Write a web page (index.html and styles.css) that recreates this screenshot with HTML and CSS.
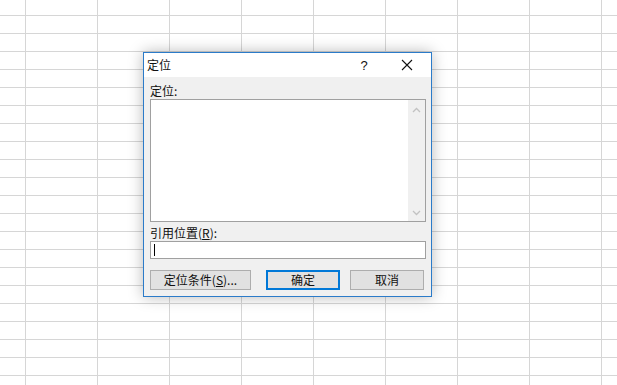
FILE: index.html
```html
<!DOCTYPE html>
<html lang="zh-CN">
  <head>
    <meta charset="UTF-8" />
    <meta name="viewport" content="width=device-width, initial-scale=1.0" />
    <title>定位</title>
    <link rel="stylesheet" href="styles.css">
  </head>
  <body>
    <div class="sheet"></div>

    <div class="dialog">
      <div class="title-bar">
        <span class="title">定位</span>
        <span class="help">?</span>
        <span class="close">
          <svg width="12" height="12" viewBox="0 0 12 12">
            <path d="M1 1 L11 11 M11 1 L1 11" stroke="#111" stroke-width="1.1" fill="none" />
          </svg>
        </span>
      </div>
      <div class="dialog-body">
        <div class="label">定位:</div>
        <div class="listbox">
          <div class="scrollbar">
            <svg width="9" height="6" viewBox="0 0 9 6">
              <path d="M1 5 L4.5 1.5 L8 5" stroke="#c2c2c2" stroke-width="1.3" fill="none" />
            </svg>
            <svg width="9" height="6" viewBox="0 0 9 6">
              <path d="M1 1 L4.5 4.5 L8 1" stroke="#c2c2c2" stroke-width="1.3" fill="none" />
            </svg>
          </div>
        </div>
        <div class="label label-ref">引用位置(<u>R</u>):</div>
        <div class="text-input"><span class="caret"></span></div>
        <div class="buttons">
          <button class="btn btn-special">定位条件(<u>S</u>)...</button>
          <button class="btn btn-default">确定</button>
          <button class="btn">取消</button>
        </div>
      </div>
    </div>
  </body>
</html>
```

FILE: styles.css
```css
body {
  margin: 0;
  width: 617px;
  height: 385px;
  overflow: hidden;
  font-family: "Noto Sans CJK SC", "Microsoft YaHei", sans-serif;
  font-size: 12px;
  color: #111;
  background-color: #ffffff;
}

.sheet {
  width: 617px;
  height: 385px;
  background-image:
    linear-gradient(to right, #d6d6d6 1px, transparent 1px),
    linear-gradient(to bottom, #d6d6d6 1px, transparent 1px);
  background-size: 72px 18px;
  background-position: 25px 15px;
}

.dialog {
  position: absolute;
  left: 143px;
  top: 52px;
  width: 287px;
  height: 243px;
  border: 1px solid #2b7bc9;
  background-color: #f0f0f0;
  box-shadow: 0 0 14px rgba(0, 0, 0, 0.28);
  display: flex;
  flex-direction: column;
}

.title-bar {
  height: 24px;
  background-color: #ffffff;
  display: flex;
  align-items: center;
  padding-left: 3px;
}

.title {
  flex: 1;
  font-size: 12px;
  line-height: 16px;
}

.help {
  width: 16px;
  text-align: center;
  font-family: "Liberation Sans", sans-serif;
  font-size: 13px;
  margin-right: 29px;
}

.close {
  display: flex;
  align-items: center;
  margin-right: 18px;
}

.dialog-body {
  flex: 1;
  padding: 6px 5px 0 6px;
  display: flex;
  flex-direction: column;
}

.label {
  line-height: 16px;
  height: 16px;
}

.listbox {
  height: 121px;
  background-color: #ffffff;
  border: 1px solid #a0a0a0;
  display: flex;
  justify-content: flex-end;
}

.scrollbar {
  width: 17px;
  background-color: #f0f0f0;
  display: flex;
  flex-direction: column;
  justify-content: space-between;
  align-items: center;
  padding: 7px 0 5px;
}

.label-ref {
  margin-top: 3px;
  height: 16px;
}

.text-input {
  height: 16px;
  background-color: #ffffff;
  border: 1px solid #a0a0a0;
  display: flex;
  align-items: center;
  padding-left: 3px;
}

.caret {
  width: 1px;
  height: 12px;
  background-color: #000;
}

.buttons {
  display: flex;
  margin-top: 11px;
}

.btn {
  height: 20px;
  width: 74px;
  padding: 0;
  border: 1px solid #adadad;
  background-color: #e1e1e1;
  font-family: "Noto Sans CJK SC", "Microsoft YaHei", sans-serif;
  font-size: 12px;
  color: #111;
  margin-left: 10px;
  line-height: 16px;
}

.btn-special {
  width: 101px;
  margin-left: 0;
}

.btn-default {
  margin-left: 15px;
  border: 2px solid #0078d7;
}
```
